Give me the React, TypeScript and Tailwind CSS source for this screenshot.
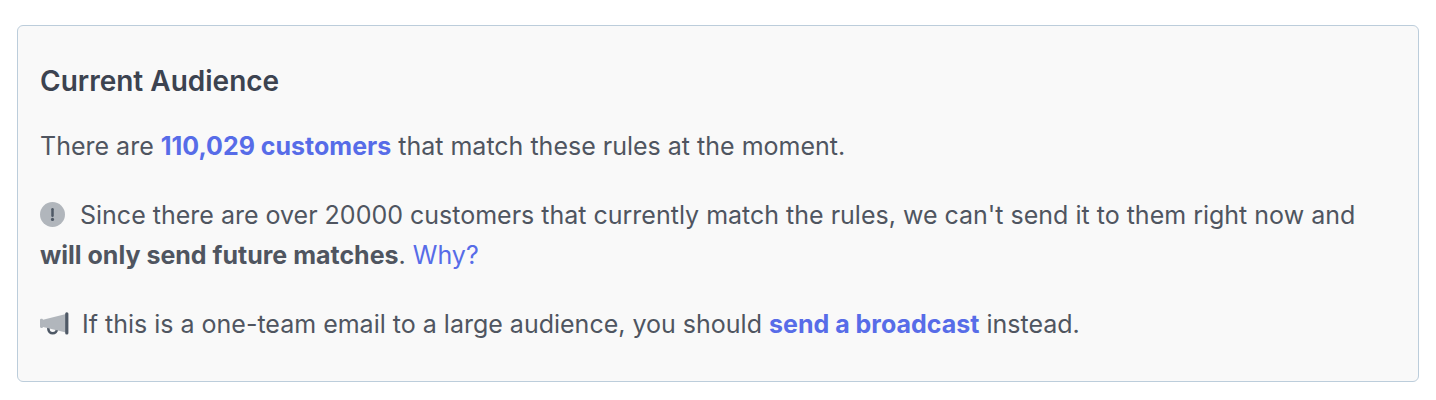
function AlertIcon() {
  return (
    <svg viewBox="0 0 25 25" className="mr-[15px] inline-block size-[25px] align-[-3px]" aria-hidden="true">
      <circle cx="12.5" cy="12.5" r="12.5" fill="#b1b6bc" />
      <path d="M12.5 7.3v6.4" stroke="#4f5966" strokeWidth="2.5" strokeLinecap="round" />
      <circle cx="12.5" cy="17.4" r="1.6" fill="#4f5966" />
    </svg>
  );
}

function MegaphoneIcon() {
  return (
    <svg viewBox="0 0 30 24" className="mr-3 inline-block h-6 w-[30px] align-[-3px]" aria-hidden="true">
      <path d="M8.4 15.5V17a4.3 4.3 0 0 0 8.6 0" fill="none" stroke="#4f5966" strokeWidth="2.6" />
      <path d="M0 7.9Q0 6.8 1.1 6.8H2Q2.8 6.8 3 7.7L26 2v18.5L3 15Q2.8 15.9 2 15.9H1.1Q0 15.9 0 14.8z" fill="#b1b6bc" />
      <rect x="25.2" y="0.3" width="3.2" height="22.2" rx="1.5" fill="#4f5966" />
    </svg>
  );
}

export default function App() {
  return (
    <main className="min-h-screen bg-white px-[17px] py-[25px] font-['Inter',sans-serif] text-[#4f5560]">
      <section className="rounded-md border border-[#bccddb] bg-[#f9f9f9] px-[22px] pt-9 pb-[37px] text-[25px] leading-10">
        <h2 className="text-[28px] leading-[38px] font-semibold text-[#3c4350]">Current Audience</h2>
        <p className="mt-[26px]">
          There are{" "}
          <a href="#customers" className="font-bold text-[#576ce8]">
            110,029 customers
          </a>{" "}
          that match these rules at the moment.
        </p>
        <p className="mt-[29px]">
          <AlertIcon />
          Since there are over 20000 customers that currently match the rules, we can't send it to them right now and{" "}
          <strong className="font-bold">will only send future matches</strong>.{" "}
          <a href="#why" className="text-[#576ce8]">
            Why?
          </a>
        </p>
        <p className="mt-[29px]">
          <MegaphoneIcon />
          If this is a one-team email to a large audience, you should{" "}
          <a href="#broadcast" className="font-bold text-[#576ce8]">
            send a broadcast
          </a>{" "}
          instead.
        </p>
      </section>
    </main>
  );
}
